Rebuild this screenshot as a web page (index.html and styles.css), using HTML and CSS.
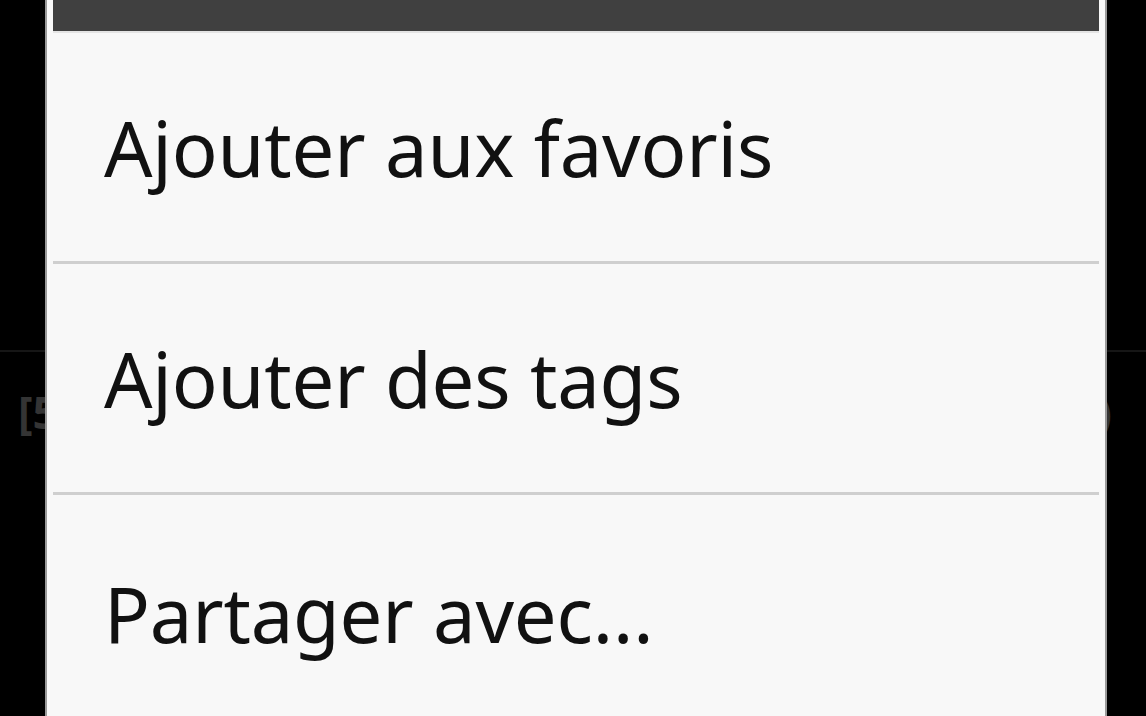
FILE: index.html
```html
<!DOCTYPE html>
<html lang="fr">
<head>
<meta charset="utf-8">
<title>Menu</title>
<link rel="stylesheet" href="styles.css">
</head>
<body>
<div class="screen">
  <div class="bg">
    <div class="bg-top"></div>
    <div class="bg-row">
      <span class="bg-left">[5</span>
      <span class="bg-right">)</span>
    </div>
  </div>
  <div class="dialog">
    <div class="title-bar"></div>
    <ul class="menu">
      <li class="item">Ajouter aux favoris</li>
      <li class="item">Ajouter des tags</li>
      <li class="item">Partager avec...</li>
    </ul>
  </div>
</div>
</body>
</html>
```
FILE: styles.css
```css
html, body {
  margin: 0;
  padding: 0;
  background: #000;
  overflow: hidden;
}
.screen {
  position: relative;
  width: 1146px;
  height: 716px;
  overflow: hidden;
  font-family: "Noto Sans", "Open Sans", "DejaVu Sans", sans-serif;
}
.bg {
  display: flex;
  flex-direction: column;
}
.bg-top {
  height: 350px;
  border-bottom: 2px solid #161616;
}
.bg-row {
  display: flex;
  justify-content: space-between;
  align-items: center;
  padding: 30px 0 0 18px;
  font-size: 44px;
  font-weight: bold;
  color: #343434;
}
.bg-right {
  padding-right: 34px;
}
.dialog {
  position: absolute;
  left: 45px;
  top: 0;
  width: 1058px;
  height: 740px;
  background: #f8f8f8;
  border-left: 2px solid #9a9a9a;
  border-right: 2px solid #9a9a9a;
}
.title-bar {
  height: 31px;
  margin: 0 6px;
  background: #404040;
  border-bottom: 2px solid #e4e4e4;
}
.menu {
  list-style: none;
  margin: 0;
  padding: 0;
}
.item {
  display: flex;
  align-items: center;
  margin: 0 6px;
  padding: 0 0 0 51px;
  box-sizing: border-box;
  height: 231px;
  font-size: 76px;
  letter-spacing: -0.2px;
  color: #111;
  border-bottom: 3px solid #cfcfcf;
}
.item:last-child {
  border-bottom: none;
  padding-top: 6px;
}
```
